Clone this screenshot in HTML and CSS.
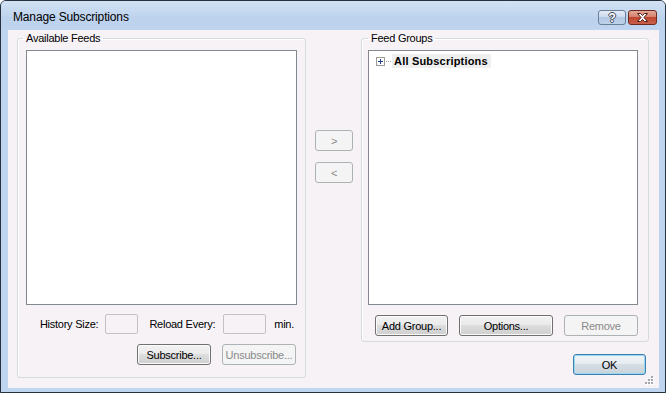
FILE: index.html
```html
<!DOCTYPE html>
<html lang="en">
  <head>
    <meta charset="UTF-8" />
    <title>Manage Subscriptions</title>
    <link rel="stylesheet" href="styles.css">
  </head>
  <body>
    <div class="window">
      <div class="titlebar">
        <span class="title">Manage Subscriptions</span>
        <div class="caption-buttons">
          <span class="cap-btn help">?</span>
          <span class="cap-btn close">
            <svg width="13" height="9" viewBox="0 0 13 9">
              <path d="M1.5 0.5h3l2 2 2-2h3l-3.5 4 3.5 4h-3l-2-2-2 2h-3l3.5-4z" fill="#fff" stroke="#4a1a14" stroke-width="1" stroke-linejoin="round" />
            </svg>
          </span>
        </div>
      </div>

      <div class="client">
        <fieldset class="group feeds">
          <legend>Available Feeds</legend>
          <div class="listbox"></div>
          <div class="settings-row">
            <span class="field-label">History Size:</span>
            <span class="textbox history"></span>
            <span class="field-label reload">Reload Every:</span>
            <span class="textbox reload-box"></span>
            <span class="field-label">min.</span>
          </div>
          <div class="button-row">
            <button class="btn w74">Subscribe...</button>
            <button class="btn w74" disabled>Unsubscribe...</button>
          </div>
        </fieldset>

        <div class="move-buttons">
          <button class="btn arrow" disabled>&gt;</button>
          <button class="btn arrow" disabled>&lt;</button>
        </div>

        <div class="right-column">
          <fieldset class="group feed-groups">
            <legend>Feed Groups</legend>
            <div class="tree">
              <div class="tree-item">
                <svg class="expander" width="9" height="9" viewBox="0 0 9 9">
                  <rect x="0.5" y="0.5" width="8" height="8" fill="#fff" stroke="#9a9a9a" />
                  <path d="M2 4.5h5M4.5 2v5" stroke="#1f3f8f" stroke-width="1" />
                </svg>
                <span class="dots"></span>
                <span class="item-text">All Subscriptions</span>
              </div>
            </div>
            <div class="button-row groups-buttons">
              <button class="btn w73">Add Group...</button>
              <button class="btn w94">Options...</button>
              <button class="btn w74" disabled>Remove</button>
            </div>
          </fieldset>
          <div class="dialog-buttons">
            <button class="btn default w73">OK</button>
          </div>
        </div>

        <svg class="size-grip" width="9" height="9" viewBox="0 0 9 9">
          <g fill="#fff">
            <rect x="7" y="1" width="2" height="2" />
            <rect x="4" y="4" width="2" height="2" />
            <rect x="7" y="4" width="2" height="2" />
            <rect x="1" y="7" width="2" height="2" />
            <rect x="4" y="7" width="2" height="2" />
            <rect x="7" y="7" width="2" height="2" />
          </g>
          <g fill="#a4a8ae">
            <rect x="6" y="0" width="2" height="2" />
            <rect x="3" y="3" width="2" height="2" />
            <rect x="6" y="3" width="2" height="2" />
            <rect x="0" y="6" width="2" height="2" />
            <rect x="3" y="6" width="2" height="2" />
            <rect x="6" y="6" width="2" height="2" />
          </g>
        </svg>
      </div>
    </div>
  </body>
</html>
```

FILE: styles.css
```css
body {
  margin: 0;
  background: #fff;
  font-family: "Liberation Sans", Arial, sans-serif;
  font-size: 11px;
  letter-spacing: -0.25px;
  color: #000;
}

.window {
  width: 666px;
  height: 393px;
  box-sizing: border-box;
  border: 1px solid #26323f;
  border-radius: 6px 6px 0 0;
  background: #bfd4ee;
  box-shadow: 0 1px 0 #3cc3d4;
  display: flex;
  flex-direction: column;
}

.titlebar {
  height: 29px;
  flex: none;
  box-sizing: border-box;
  display: flex;
  justify-content: space-between;
  align-items: flex-start;
  padding: 9px 8px 0 12px;
  background: linear-gradient(#d3e2f4, #bcd2ed 60%, #bfd4ee);
  border-radius: 5px 5px 0 0;
}

.title {
  font-size: 12px;
  line-height: 15px;
  letter-spacing: -0.15px;
  color: #000;
}

.caption-buttons {
  display: flex;
  gap: 2px;
}

.cap-btn {
  height: 15px;
  box-sizing: border-box;
  border-radius: 3px;
  display: flex;
  align-items: center;
  justify-content: center;
}

.help {
  width: 28px;
  border: 1px solid #6b7e98;
  background: linear-gradient(#e4edf8, #cbdaee 50%, #b3c8e3 50%, #bed2ea);
  color: #fff;
  font-weight: bold;
  font-size: 12px;
  text-shadow: 1px 0 #3b4656, -1px 0 #3b4656, 0 1px #3b4656, 0 -1px #3b4656;
}

.close {
  width: 29px;
  border: 1px solid #6d2a20;
  background: linear-gradient(#e4a898, #d57c68 50%, #bf4630 50%, #c9604a);
}

.client {
  position: relative;
  flex: 1;
  margin: 0 6px 4px 7px;
  background: #f6f2f6;
  display: flex;
  align-items: flex-start;
  padding: 2px 10px 0 9px;
}

.group {
  margin: 0;
  border: 1px solid #d5dadf;
  border-radius: 3px;
  box-sizing: border-box;
  min-width: 0;
  box-shadow: inset 1px 1px 0 #fff;
}

.group legend {
  padding: 0 3px;
  line-height: 13px;
}

.feeds {
  width: 289px;
  padding: 5px 8px 12px;
}

.feeds legend {
  margin-left: -3px;
}

.listbox {
  height: 255px;
  box-sizing: border-box;
  border: 1px solid #828790;
  background: #fff;
}

.settings-row {
  margin-top: 9px;
  height: 20px;
  display: flex;
  align-items: center;
  justify-content: flex-end;
  padding-right: 3px;
}

.field-label {
  line-height: 13px;
}

.textbox {
  height: 20px;
  box-sizing: border-box;
  border: 1px solid #c3c3c3;
  border-radius: 2px;
  margin: 0 8px;
}

.history {
  width: 33px;
  margin-left: 7px;
  margin-right: 11px;
}

.reload-box {
  width: 43px;
}

.button-row {
  margin-top: 10px;
  display: flex;
  justify-content: flex-end;
  gap: 11px;
  padding-right: 1px;
}

.btn {
  height: 21px;
  box-sizing: border-box;
  padding: 0;
  font-family: inherit;
  font-size: 11px;
  letter-spacing: -0.25px;
  color: #000;
  border: 1px solid #707070;
  border-radius: 3px;
  background: linear-gradient(#f2f2f2, #ebebeb 45%, #dddddd 50%, #cfcfcf);
  box-shadow: inset 0 0 0 1px #fbfbfb;
}

.btn:disabled {
  color: #8a8a8a;
  border-color: #adb2b5;
  background: #f4f4f4;
  box-shadow: none;
}

.btn.default {
  border-color: #3c7fb1;
  background: linear-gradient(#f0f4f7, #e6ecf0 45%, #d6dee4 50%, #c9d3da);
  box-shadow: inset 0 0 0 1px #9ad8f2;
}

.w73 { width: 73px; }
.w74 { width: 74px; }
.w94 { width: 94px; }

.move-buttons {
  width: 38px;
  margin: 0 8px 0 9px;
  padding-top: 98px;
  display: flex;
  flex-direction: column;
  gap: 11px;
}

.arrow {
  width: 38px;
  color: #6c6c6c;
}

.right-column {
  width: 288px;
  display: flex;
  flex-direction: column;
}

.feed-groups {
  width: 288px;
  padding: 5px 10px 5px 6px;
}

.tree {
  height: 255px;
  box-sizing: border-box;
  border: 1px solid #828790;
  background: #fff;
  padding: 3px 0 0 7px;
}

.tree-item {
  height: 14px;
  display: flex;
  align-items: center;
}

.dots {
  width: 5px;
  height: 1px;
  margin: 0 1px;
  background: repeating-linear-gradient(90deg, #a0a0a0 0 1px, transparent 1px 2px);
}

.item-text {
  font-weight: bold;
  letter-spacing: 0.2px;
  line-height: 14px;
  padding: 0 3px 0 2px;
  background: #efefef;
}

.groups-buttons {
  padding-right: 0;
}

.dialog-buttons {
  margin-top: 12px;
  display: flex;
  justify-content: flex-end;
  padding-right: 3px;
}

.size-grip {
  position: absolute;
  right: 5px;
  bottom: 3px;
}
```
